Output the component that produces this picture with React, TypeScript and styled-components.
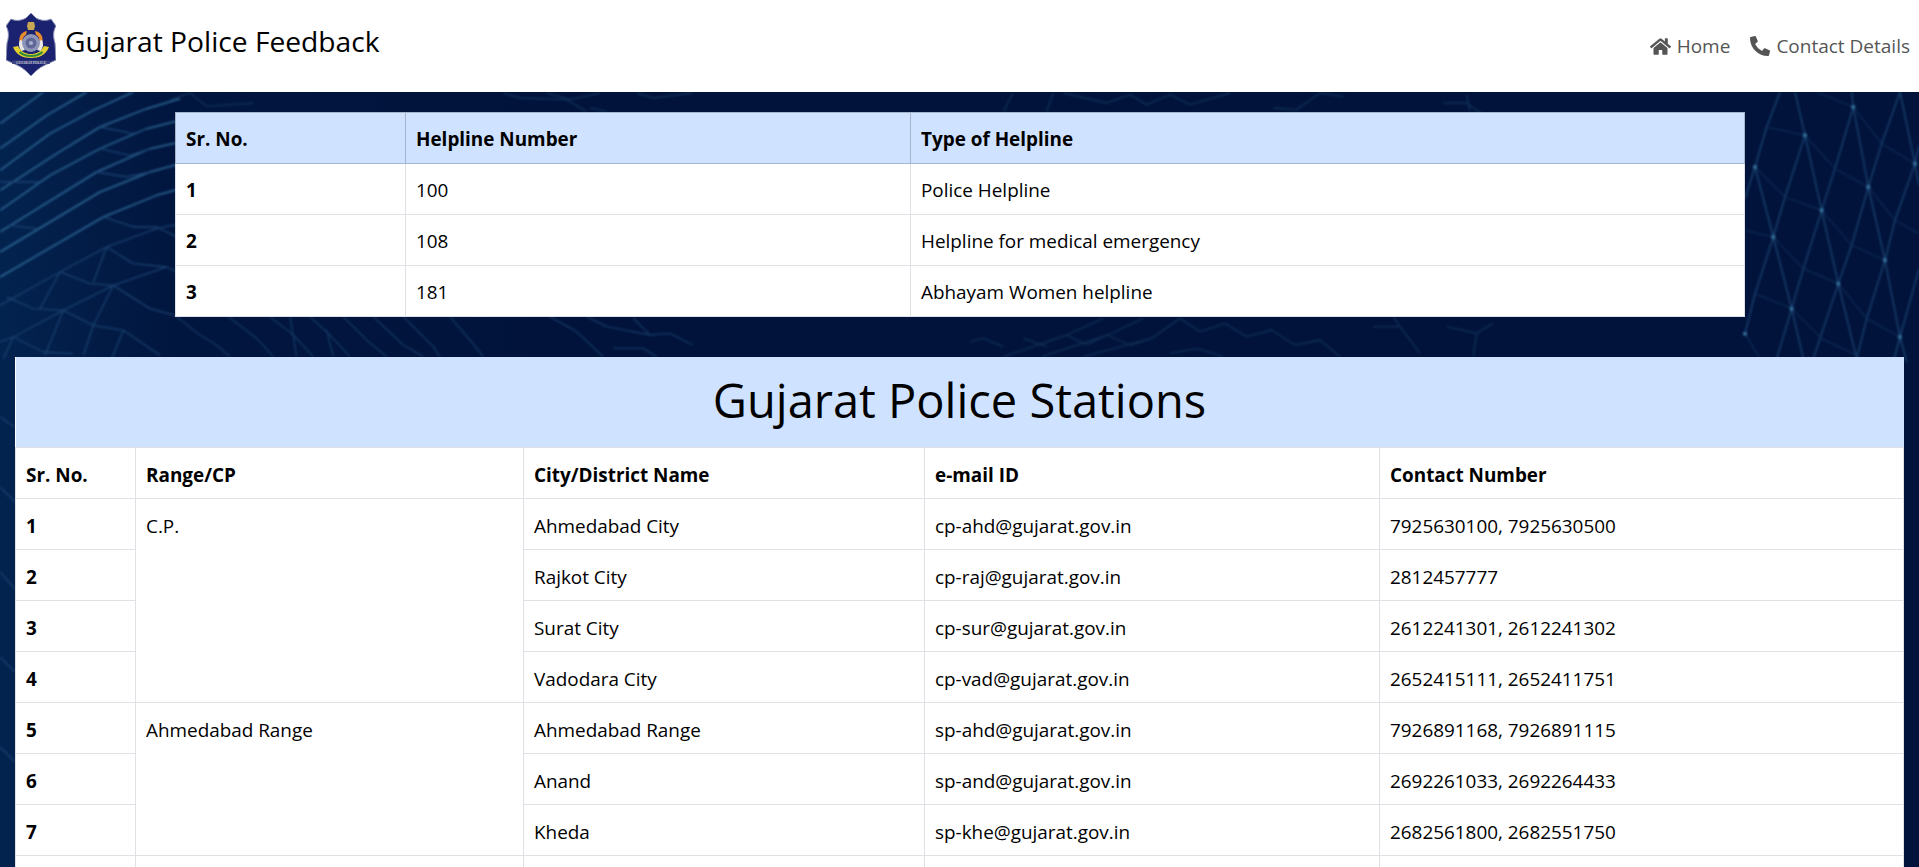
import styled, { createGlobalStyle } from "styled-components";
import { FaHome, FaPhoneAlt } from "react-icons/fa";

const GlobalStyle = createGlobalStyle`
  html, body {
    margin: 0;
    padding: 0;
    height: 100%;
    overflow: hidden;
    background: #fff;
  }
  * {
    box-sizing: border-box;
  }
  body {
    font-family: "Open Sans", "Noto Sans", "Liberation Sans", sans-serif;
    color: #000;
  }
`;

const Page = styled.div`
  height: 100vh;
  overflow: hidden;
  display: flex;
  flex-direction: column;
`;

const Header = styled.header`
  flex: 0 0 92px;
  display: flex;
  align-items: center;
  justify-content: space-between;
  background: #fff;
  padding: 0 9px 0 6px;
`;

const Brand = styled.a`
  display: flex;
  align-items: center;
  gap: 9px;
  margin-top: -4px;
  color: #000;
  font-size: 28.2px;
  line-height: 38px;
  text-decoration: none;

  span {
    margin-top: -6px;
  }
`;

const Nav = styled.nav`
  display: flex;
  align-items: center;
  gap: 20px;
`;

const NavLink = styled.a<{ $iconSize: number }>`
  display: flex;
  align-items: center;
  gap: 6px;
  color: #555;
  font-size: 19px;
  text-decoration: none;

  svg {
    font-size: ${(p) => p.$iconSize}px;
    fill: #555;
  }
`;

const Main = styled.main`
  position: relative;
  flex: 1;
  overflow: hidden;
  padding: 20px 15px 0;
  background: linear-gradient(90deg, #03234f 0, #01163f 9%, #01133b 30%, #01133b 100%);
`;

const Mesh = styled.svg`
  position: absolute;
  inset: 0;
  width: 100%;
  height: 100%;
  filter: blur(1px);
`;

const Content = styled.div`
  position: relative;
`;

const Table = styled.table`
  width: 100%;
  table-layout: fixed;
  border-collapse: collapse;
  background: #fff;
  font-size: 18.9px;
`;

const HelplineTable = styled(Table)`
  width: 1570px;
  margin: 0 159px 40px 160px;
`;

const StationTable = styled(Table)`
  tbody td,
  thead tr + tr th {
    padding-top: 14px;
    padding-bottom: 10px;
  }
`;

const Cell = styled.td<{ $bold?: boolean }>`
  height: 51px;
  padding: 13px 10px 11px;
  line-height: 26px;
  vertical-align: top;
  border: 1px solid #dee2e6;
  font-weight: ${(p) => (p.$bold ? 700 : 400)};
`;

const PrimaryRow = styled.tr`
  background: #cfe2ff;

  th {
    height: 51px;
    padding: 13px 10px 11px;
    line-height: 26px;
    text-align: left;
    vertical-align: top;
    font-weight: 700;
    border: 1px solid #a6b5cc;
  }
`;

const TitleCell = styled.th`
  height: 90px;
  padding: 0 0 4px;
  background: #cfe2ff;
  font-size: 47px;
  font-weight: 400;
  line-height: 86px;
  text-align: center;
`;

const HeadCell = styled.th`
  height: 51px;
  padding: 13px 10px 11px;
  line-height: 26px;
  text-align: left;
  vertical-align: top;
  font-weight: 700;
  border: 1px solid #dee2e6;
`;

const Logo = () => (
  <svg width="50" height="63" viewBox="0 0 50 63" role="img" aria-label="Gujarat Police">
    <path
      d="M25 0 L30 5 C35 8 41 8 45 6 L50 13 C47 18 47 24 49 30 L50 47 C44 50 35 53 30 58 L25 63 L20 58 C15 53 6 50 0 47 L1 30 C3 24 3 18 0 13 L5 6 C9 8 15 8 20 5 Z"
      fill="#1b2270"
      stroke="#8d93b5"
      strokeWidth="1"
    />
    <path d="M22 9 h6 l1 4 -1 4 h-6 l-1 -4 Z" fill="#c9a653" />
    <path d="M14 31 C12 24 15 19 21 18 L20 22 C17 23 16 27 17 31 Z" fill="#e88b2d" />
    <path d="M36 31 C38 24 35 19 29 18 L30 22 C33 23 34 27 33 31 Z" fill="#e88b2d" />
    <path d="M13 33 C13 30 13 29 14 27 L17 28 C17 31 17 34 19 37 L15 38 Z" fill="#e8e8e8" />
    <path d="M37 33 C37 30 37 29 36 27 L33 28 C33 31 33 34 31 37 L35 38 Z" fill="#e8e8e8" />
    <circle cx="25" cy="30" r="9" fill="#8f96b8" />
    <circle cx="25" cy="30" r="5.5" fill="#5f6796" />
    <circle cx="25" cy="30" r="2" fill="#aab0cc" />
    <path d="M7 34 L12 33 C15 39 20 41 25 41 C30 41 35 39 38 33 L43 34 C40 42 33 45 25 45 C17 45 10 42 7 34 Z" fill="#e4cf2e" />
    <path d="M14 38 C18 41 21 42 25 42 C29 42 32 41 36 38 L37 40 C33 43 29 44 25 44 C21 44 17 43 13 40 Z" fill="#2e8b3a" />
    <rect x="6" y="47.5" width="38" height="3.6" rx="1" fill="#3a4180" />
    <text x="25" y="50.6" fontSize="3.4" fontWeight="700" fontFamily="Liberation Serif, serif" textAnchor="middle" fill="#c8c8d8">
      GUJARAT POLICE
    </text>
  </svg>
);

// network lines of the page background, in 3x coords of each strip
const LEFT_BRIGHT = [
  "0,95 130,0",
  "0,170 140,70 260,0",
  "0,235 150,125 280,55 400,0",
  "0,295 170,185 300,105 440,50 540,20",
  "0,355 150,250 300,170 440,110 540,85",
  "0,420 290,240 450,170 540,150",
  "0,480 300,300 450,240 540,215",
  "0,555 310,375 470,310 540,290",
];
const LEFT_FAINT = [
  "0,640 180,540 320,465 470,410 540,395",
  "0,750 40,735 190,655 340,580 500,525",
  "310,375 400,405 470,405 540,440",
  "320,465 400,515 500,525 540,545",
  "180,540 270,575 340,580 450,650 540,675",
  "20,615 100,650 190,655 280,700 370,715 480,790",
  "40,735 130,780 220,785",
  "190,655 135,790",
  "340,580 280,700 250,790",
  "320,465 280,570",
  "180,540 120,650",
  "40,735 10,800",
  "370,715 335,800",
  "0,270 120,270",
  "30,400 110,410",
  "300,105 400,125 440,110",
  "300,170 390,190 450,170",
  "290,240 380,255 450,240",
];
const RIGHT_BRIGHT = [
  "340,45 285,230 245,355 190,530 155,650 110,800",
  "480,0 425,155 385,285 335,460 295,575 240,740 220,800",
  "537,160 525,215 465,385 435,505 380,680 350,800",
  "537,530 515,610 480,735 460,810",
  "195,130 135,315 100,435 45,605 15,725",
  "120,0 80,105 45,225 15,320",
  "340,45 385,285 435,505 480,735 500,810",
  "195,130 245,355 295,575 350,800",
  "45,225 100,435 155,650 190,800",
  "480,0 525,215 537,280",
  "165,0 195,130",
  "335,0 340,45",
];
const RIGHT_FAINT = [
  "80,105 195,130",
  "230,0 340,45",
  "285,230 385,285",
  "425,155 525,215",
  "135,315 245,355",
  "15,415 100,435",
  "335,460 435,505",
  "465,385 537,425",
  "190,530 295,575",
  "45,605 155,650",
  "380,680 480,735",
  "245,740 350,790",
  "195,130 285,230",
  "45,225 135,315",
  "340,45 425,155",
  "100,435 190,530",
  "245,355 335,460",
  "385,285 465,385",
  "295,575 380,680",
  "155,650 245,740",
  "15,725 60,800",
];
const RIGHT_NODES = [
  [340, 45], [195, 130], [525, 215], [45, 225], [385, 285], [245, 355], [100, 435],
  [435, 505], [295, 575], [155, 650], [480, 735], [15, 725],
];
const MIDDLE_LEFT = [
  "20,20 90,75 140,105 180,140",
  "175,20 260,85 310,140",
  "300,20 370,75 430,140",
  "420,20 480,75 540,140",
  "520,20 590,90 650,140",
  "610,20 700,105 760,140",
  "700,20 790,110 810,140",
  "840,20 900,90 940,140",
  "1140,20 1220,65 1300,140",
  "1250,20 1310,50 1440,75 1500,70 1568,105",
  "1390,25 1440,75",
  "1330,115 1420,115 1460,140",
  "360,20 380,140",
  "470,60 490,140",
];
const MIDDLE_RIGHT = [
  "0,95 40,85 100,110",
  "160,85 230,110",
  "290,75 350,105 410,75 480,105 545,85 630,25 690,65 765,40 830,80 905,60 975,105 1050,90 1110,140",
  "1210,50 1290,50 1350,130",
  "100,140 290,75 400,25",
  "215,140 415,75 520,25",
  "340,140 545,85",
  "600,130 680,115 760,140",
  "1290,50 1270,20",
  "1430,50 1520,70 1510,140",
  "1520,70 1568,40",
];
const TOP_LEFT = [
  "0,35 60,15 110,55 250,45",
  "1000,15 1050,30 1190,35 1250,70",
  "1130,15 1200,35 1290,15",
  "1260,60 1310,70",
  "1400,15 1450,30 1568,15",
];
const TOP_RIGHT = [
  "280,15 410,45 480,20 530,50 600,20 660,50 780,15",
  "910,60 980,65 1050,15 1120,25",
  "1420,45 1490,45 1568,100",
  "100,70 130,15",
  "230,70 250,15",
  "1490,20 1500,70",
];
const EDGE = [
  "0,60 15,70",
  "0,130 15,145",
  "0,215 15,232",
  "0,300 15,315",
  "0,390 15,405",
];

const Lines = ({ items, color, width }: { items: string[]; color: string; width: number }) => (
  <g fill="none" stroke={color} strokeWidth={width} strokeLinejoin="round">
    {items.map((pts) => (
      <polyline key={pts} points={pts} />
    ))}
  </g>
);

const Background = () => (
  <Mesh aria-hidden="true">
    {/* the svg starts under the 92px header */}
    <g transform="scale(0.3333)">
      <Lines items={LEFT_BRIGHT} color="#2f6a98" width={4.5} />
      <Lines items={LEFT_FAINT} color="#1b4270" width={4} />
    </g>
    <g transform="translate(1740 0) scale(0.3333)">
      <Lines items={RIGHT_BRIGHT} color="#1e4a78" width={3.8} />
      <Lines items={RIGHT_FAINT} color="#102d58" width={3.6} />
      {RIGHT_NODES.map(([x, y]) => (
        <circle key={`${x}-${y}`} cx={x} cy={y} r="6" fill="#3a7aa5" />
      ))}
    </g>
    <g transform="translate(170 218) scale(0.3333)">
      <Lines items={MIDDLE_LEFT} color="#153a66" width={4} />
    </g>
    <g transform="translate(970 218) scale(0.3333)">
      <Lines items={MIDDLE_RIGHT} color="#123259" width={4} />
    </g>
    <g transform="translate(170 -4) scale(0.3333)">
      <Lines items={TOP_LEFT} color="#123259" width={4} />
    </g>
    <g transform="translate(970 -4) scale(0.3333)">
      <Lines items={TOP_RIGHT} color="#123259" width={4} />
    </g>
    <g transform="translate(0 265)">
      <Lines items={EDGE} color="#1b4270" width={1.3} />
    </g>
  </Mesh>
);

const helplines = [
  { no: 1, number: "100", type: "Police Helpline" },
  { no: 2, number: "108", type: "Helpline for medical emergency" },
  { no: 3, number: "181", type: "Abhayam Women helpline" },
];

const ranges = [
  {
    name: "C.P.",
    stations: [
      { no: 1, city: "Ahmedabad City", email: "cp-ahd@gujarat.gov.in", phone: "7925630100, 7925630500" },
      { no: 2, city: "Rajkot City", email: "cp-raj@gujarat.gov.in", phone: "2812457777" },
      { no: 3, city: "Surat City", email: "cp-sur@gujarat.gov.in", phone: "2612241301, 2612241302" },
      { no: 4, city: "Vadodara City", email: "cp-vad@gujarat.gov.in", phone: "2652415111, 2652411751" },
    ],
  },
  {
    name: "Ahmedabad Range",
    stations: [
      { no: 5, city: "Ahmedabad Range", email: "sp-ahd@gujarat.gov.in", phone: "7926891168, 7926891115" },
      { no: 6, city: "Anand", email: "sp-and@gujarat.gov.in", phone: "2692261033, 2692264433" },
      { no: 7, city: "Kheda", email: "sp-khe@gujarat.gov.in", phone: "2682561800, 2682551750" },
    ],
  },
];

export default function App() {
  return (
    <Page>
      <GlobalStyle />
      <Header>
        <Brand href="#">
          <Logo />
          <span>Gujarat Police Feedback</span>
        </Brand>
        <Nav>
          <NavLink href="#" $iconSize={21}>
            <FaHome />
            Home
          </NavLink>
          <NavLink href="#" $iconSize={20}>
            <FaPhoneAlt />
            Contact Details
          </NavLink>
        </Nav>
      </Header>
      <Main>
        <Background />
        <Content>
          <HelplineTable>
            <colgroup>
              <col width="230" />
              <col width="505" />
              <col />
            </colgroup>
            <thead>
              <PrimaryRow>
                <th>Sr. No.</th>
                <th>Helpline Number</th>
                <th>Type of Helpline</th>
              </PrimaryRow>
            </thead>
            <tbody>
              {helplines.map((h) => (
                <tr key={h.no}>
                  <Cell $bold>{h.no}</Cell>
                  <Cell>{h.number}</Cell>
                  <Cell>{h.type}</Cell>
                </tr>
              ))}
            </tbody>
          </HelplineTable>
          <StationTable>
            <colgroup>
              <col width="120" />
              <col width="388" />
              <col width="401" />
              <col width="455" />
              <col />
            </colgroup>
            <thead>
              <tr>
                <TitleCell colSpan={5}>Gujarat Police Stations</TitleCell>
              </tr>
              <tr>
                <HeadCell>Sr. No.</HeadCell>
                <HeadCell>Range/CP</HeadCell>
                <HeadCell>City/District Name</HeadCell>
                <HeadCell>e-mail ID</HeadCell>
                <HeadCell>Contact Number</HeadCell>
              </tr>
            </thead>
            <tbody>
              {ranges.map((r) =>
                r.stations.map((s, i) => (
                  <tr key={s.no}>
                    <Cell $bold>{s.no}</Cell>
                    {i === 0 && <Cell rowSpan={r.stations.length}>{r.name}</Cell>}
                    <Cell>{s.city}</Cell>
                    <Cell>{s.email}</Cell>
                    <Cell>{s.phone}</Cell>
                  </tr>
                ))
              )}
              <tr>
                <Cell />
                <Cell />
                <Cell />
                <Cell />
                <Cell />
              </tr>
            </tbody>
          </StationTable>
        </Content>
      </Main>
    </Page>
  );
}
